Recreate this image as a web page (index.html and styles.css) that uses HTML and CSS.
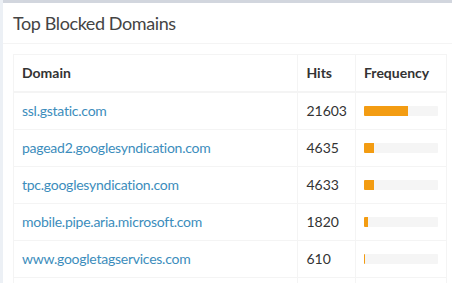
FILE: index.html
```html
<!DOCTYPE html>
<html lang="en">

<head>
    <meta charset="UTF-8">
    <title>Top Blocked Domains</title>
    <link rel="stylesheet" href="styles.css">
</head>

<body>
    <div class="box">
        <div class="box-header">
            <h3 class="box-title">Top Blocked Domains</h3>
        </div>
        <div class="box-body">
            <table class="table">
                <thead>
                    <tr>
                        <th class="col-domain">Domain</th>
                        <th class="col-hits">Hits</th>
                        <th class="col-freq">Frequency</th>
                    </tr>
                </thead>
                <tbody>
                    <tr>
                        <td><a href="#">ssl.gstatic.com</a></td>
                        <td>21603</td>
                        <td><div class="progress"><div class="bar" style="width: 60%"></div></div></td>
                    </tr>
                    <tr>
                        <td><a href="#">pagead2.googlesyndication.com</a></td>
                        <td>4635</td>
                        <td><div class="progress"><div class="bar" style="width: 12.9%"></div></div></td>
                    </tr>
                    <tr>
                        <td><a href="#">tpc.googlesyndication.com</a></td>
                        <td>4633</td>
                        <td><div class="progress"><div class="bar" style="width: 12.9%"></div></div></td>
                    </tr>
                    <tr>
                        <td><a href="#">mobile.pipe.aria.microsoft.com</a></td>
                        <td>1820</td>
                        <td><div class="progress"><div class="bar" style="width: 5.1%"></div></div></td>
                    </tr>
                    <tr>
                        <td><a href="#">www.googletagservices.com</a></td>
                        <td>610</td>
                        <td><div class="progress"><div class="bar" style="width: 1.7%"></div></div></td>
                    </tr>
                    <tr>
                        <td><a href="#">&nbsp;</a></td>
                        <td></td>
                        <td></td>
                    </tr>
                </tbody>
            </table>
        </div>
    </div>
</body>

</html>
```

FILE: styles.css
```css
html,
body {
    margin: 0;
    overflow: hidden;
    background: #ecf0f5;
    font-family: 'Lato', 'Liberation Sans', sans-serif;
    font-size: 14px;
    color: #333;
}

.box {
    margin-left: 3px;
    width: 454px;
    background: #fff;
    border-top: 3px solid #d2d6de;
}

.box-header {
    height: 40px;
    padding: 0 10px;
    display: flex;
    align-items: center;
    border-bottom: 1px solid #f4f4f4;
}

.box-title {
    margin: 0;
    font-size: 18px;
    font-weight: normal;
    letter-spacing: -0.4px;
    color: #444;
}

.box-body {
    padding: 10px;
}

.table {
    width: 434px;
    border-collapse: collapse;
    border: 1px solid #f4f4f4;
}

.table th,
.table td {
    border: 1px solid #f4f4f4;
    padding: 8px;
    line-height: 20px;
    text-align: left;
}

.table th {
    font-weight: bold;
    border-bottom-width: 2px;
}

.col-hits {
    width: 40px;
}

.col-freq {
    width: 74px;
}

.table a {
    color: #3c8dbc;
    letter-spacing: -0.25px;
    text-decoration: none;
}

.progress {
    height: 10px;
    background: #f5f5f5;
    border-radius: 1px;
    overflow: hidden;
}

.bar {
    height: 100%;
    background: #f39c12;
}
```
